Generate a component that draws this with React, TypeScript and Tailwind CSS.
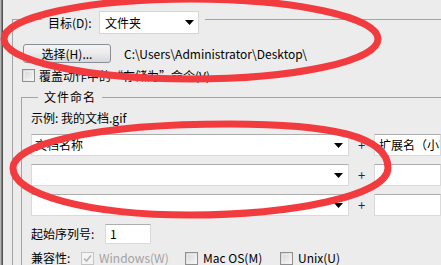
import React from "react";

const Arrow = () => (
  <svg width="9" height="5" viewBox="0 0 9 5" className="shrink-0">
    <path d="M0 0H9L4.5 5Z" fill="#000" />
  </svg>
);

const Check = ({ disabled = false, checked = false }: { disabled?: boolean; checked?: boolean }) => (
  <div
    className={
      disabled
        ? "w-[13px] h-[13px] shrink-0 border border-[#c5c5c5] bg-[#f4f4f4] flex items-center justify-center"
        : "w-[13px] h-[13px] shrink-0 border border-[#8e8f8f] bg-gradient-to-br from-[#d4d4d4] to-[#f8f8f8] p-[1px]"
    }
  >
    {checked ? (
      <svg width="11" height="11" viewBox="0 0 11 11">
        <path d="M2 5.5L4.5 8L9 2.5" stroke="#b4b4b4" strokeWidth="1.6" fill="none" />
      </svg>
    ) : (
      <div className="w-full h-full border border-[#f4f4f4]/60" />
    )}
  </div>
);

const ComboRow = ({ text }: { text?: string }) => (
  <div className="flex items-center h-[22px]">
    <div className="w-[318px] h-[22px] shrink-0 bg-white border border-[#dadada] border-t-[#adadad] flex items-center justify-between pl-[3px] pr-[5px]">
      <span className="whitespace-nowrap">{text ?? ""}</span>
      <Arrow />
    </div>
    <div className="w-[25px] shrink-0 text-center text-[#1e1e78] text-[13px]">+</div>
    <div className="flex-1 h-[22px] bg-white border border-[#dadada] border-t-[#adadad] overflow-hidden whitespace-nowrap pl-[4px] flex items-center">
      {text ? "扩展名（小写）" : ""}
    </div>
  </div>
);

export default function App() {
  return (
    <div className="relative w-[441px] h-[265px] overflow-hidden bg-[#ececec] font-['Noto_Sans_CJK_SC','Noto_Sans',sans-serif] text-[12px] leading-[16px] text-black">
      <div className="flex h-full">
        <div className="w-[3px] shrink-0 bg-gradient-to-r from-[#cfcfcf] to-[#3c3c3c]" />
        <div className="flex-1 min-w-0 pl-[9px] pt-[11px] flex flex-col">
          {/* legend row */}
          <div className="flex h-[23px] shrink-0">
            <div className="w-[30px] shrink-0 mt-[8px] border-t border-l border-[#a3a3a3]" />
            <span className="ml-[6px] w-[45px] shrink-0 self-center whitespace-nowrap">目标(D):</span>
            <div className="ml-[6px] w-[100px] h-[23px] shrink-0 bg-white border border-[#d6d6d6] flex items-center justify-between pl-[5px] pr-[4px]">
              <span>文件夹</span>
              <Arrow />
            </div>
            <div className="ml-[6px] flex-1 mt-[8px] border-t border-[#a3a3a3]" />
          </div>
          {/* outer body */}
          <div className="flex-1 border-l border-[#a3a3a3] flex flex-col">
            <div className="mt-[10px] ml-[10px] flex items-center">
              <div className="w-[88px] h-[19px] shrink-0 rounded-[3px] border border-[#8a8f96] bg-gradient-to-b from-[#f4f4f4] via-[#ebebeb] to-[#d6d8dc] flex items-center justify-center">
                选择(H)...
              </div>
              <span className="ml-[13px] whitespace-nowrap">C:\Users\Administrator\Desktop\</span>
            </div>
            <div className="mt-[6px] ml-[9px] h-[13px] flex items-center">
              <Check />
              <span className="ml-[4px] whitespace-nowrap">覆盖动作中的“存储为”命令(V)</span>
            </div>
            {/* inner group */}
            <div className="mt-[7px] ml-[8px] flex flex-col flex-1">
              <div className="flex h-[16px] shrink-0">
                <div className="w-[17px] shrink-0 mt-[8px] border-t border-l border-[#a3a3a3]" />
                <span className="ml-[6px] whitespace-nowrap tracking-[1px]">文件命名</span>
                <div className="ml-[6px] flex-1 mt-[8px] border-t border-[#a3a3a3]" />
              </div>
              <div className="flex-1 border-l border-[#a3a3a3] pl-[9px] flex flex-col">
                <div className="mt-[5px] whitespace-nowrap">示例: 我的文档.gif</div>
                <div className="mt-[8px] flex flex-col gap-[8px]">
                  <ComboRow text="文档名称" />
                  <ComboRow />
                  <ComboRow />
                </div>
                <div className="mt-[8px] h-[20px] flex items-center">
                  <span className="w-[74px] shrink-0 whitespace-nowrap">起始序列号:</span>
                  <div className="w-[46px] h-[20px] bg-white border border-[#dadada] border-t-[#adadad] pl-[4px] flex items-center">
                    1
                  </div>
                </div>
                <div className="mt-[6px] h-[16px] flex items-center whitespace-nowrap">
                  <span className="w-[50px] shrink-0">兼容性:</span>
                  <Check disabled checked />
                  <span className="ml-[5px] w-[86px] shrink-0 text-[#a3a3a3]">Windows(W)</span>
                  <Check />
                  <span className="ml-[5px] w-[77px] shrink-0">Mac OS(M)</span>
                  <Check />
                  <span className="ml-[5px]">Unix(U)</span>
                </div>
              </div>
            </div>
          </div>
        </div>
      </div>
      {/* red annotation ellipses */}
      <svg className="absolute inset-0 pointer-events-none" width="441" height="265" viewBox="0 0 441 265">
        <ellipse cx="191" cy="39" rx="187" ry="40" fill="none" stroke="#f23b3f" strokeWidth="7" />
        <path
          d="M13 168 C13 145 90 124 230 124 C330 124 388 136 388 168 C388 196 290 215 190 215 C90 215 13 195 13 168 Z"
          fill="none"
          stroke="#f23b3f"
          strokeWidth="7"
        />
      </svg>
    </div>
  );
}
